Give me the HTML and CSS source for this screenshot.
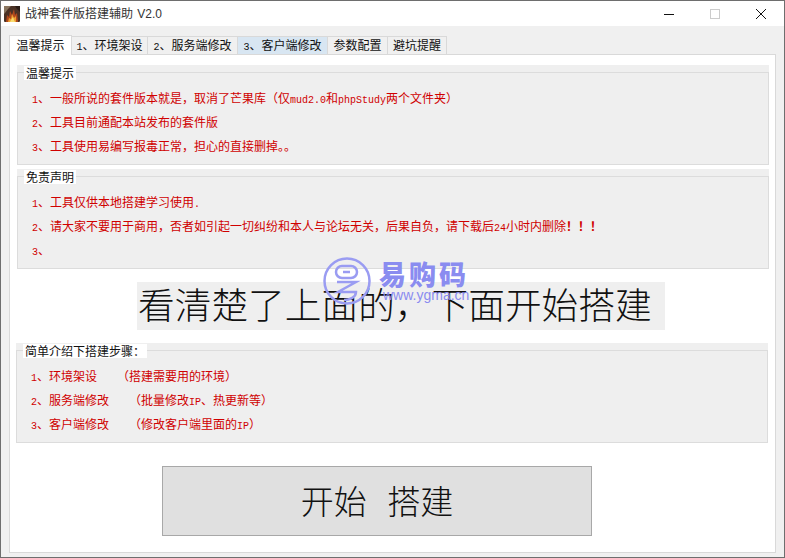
FILE: index.html
```html
<!DOCTYPE html>
<html lang="zh">
<head>
<meta charset="utf-8">
<title>战神套件版搭建辅助 V2.0</title>
<link rel="stylesheet" href="styles.css">
</head>
<body>
<div class="window">
  <header class="titlebar">
    <svg class="app-icon" viewBox="0 0 16 16" width="16" height="16">
      <rect width="16" height="16" rx="1" fill="#4a3226"/>
      <path d="M0 0H7L4 3L1 7L0 8Z" fill="#8a7660"/>
      <path d="M11 0H16V6L13 3Z" fill="#2a1c16"/>
      <path d="M2 16 L3 9 L5 11 L6 5 L8 9 L10 3 L11 9 L13 7 L14 16Z" fill="#b0481c"/>
      <path d="M4 16 L5 12 L7 13 L8 8 L10 12 L12 10 L12 16Z" fill="#eda030"/>
      <path d="M6 16 L7 14 L9 11 L10 14 L11 16Z" fill="#f8dc70"/>
    </svg>
    <span class="title">战神套件版搭建辅助 V2.0</span>
    <div class="controls">
      <svg class="ctl" viewBox="0 0 46 26" width="46" height="26"><path d="M18 13.5H28" stroke="#111" fill="none"/></svg>
      <svg class="ctl" viewBox="0 0 46 26" width="46" height="26"><rect x="18.5" y="8.5" width="9" height="9" stroke="#ccc" fill="none"/></svg>
      <svg class="ctl" viewBox="0 0 46 26" width="46" height="26"><path d="M18 8L28 18M28 8L18 18" stroke="#111" fill="none"/></svg>
    </div>
  </header>
  <div class="body">
    <nav class="tabs">
      <span class="tab active">温馨提示</span>
      <span class="tab t1"><span class="lat">1</span>、环境架设</span>
      <span class="tab t2"><span class="lat">2</span>、服务端修改</span>
      <span class="tab t3 hover"><span class="lat">3</span>、客户端修改</span>
      <span class="tab t4">参数配置</span>
      <span class="tab t5">避坑提醒</span>
    </nav>
    <main class="panel">
      <section class="group g1">
        <h2 class="legend">温馨提示</h2>
        <p><span class="lat">1</span>、一般所说的套件版本就是，取消了芒果库（仅<span class="lat">mud2.0</span>和<span class="lat">phpStudy</span>两个文件夹）</p>
        <p><span class="lat">2</span>、工具目前通配本站发布的套件版</p>
        <p><span class="lat">3</span>、工具使用易编写报毒正常，担心的直接删掉。。</p>
      </section>
      <section class="group g2">
        <h2 class="legend">免责声明</h2>
        <p><span class="lat">1</span>、工具仅供本地搭建学习使用<span class="lat">.</span></p>
        <p><span class="lat">2</span>、请大家不要用于商用，否者如引起一切纠纷和本人与论坛无关，后果自负，请下载后<span class="lat">24</span>小时内删除<b class="bang">！！！</b></p>
        <p><span class="lat">3</span>、</p>
      </section>
      <div class="banner">看清楚了上面的，下面开始搭建</div>
      <section class="group g3">
        <h2 class="legend">简单介绍下搭建步骤：</h2>
        <p><span class="lat">1</span>、环境架设<span class="gap1"></span>（搭建需要用的环境）</p>
        <p><span class="lat">2</span>、服务端修改<span class="gap2"></span>（批量修改<span class="lat">IP</span>、热更新等）</p>
        <p><span class="lat">3</span>、客户端修改<span class="gap2"></span>（修改客户端里面的<span class="lat">IP</span>）</p>
      </section>
      <div class="action"><button class="start">开始 搭建</button></div>
    </main>
  </div>
  <div class="watermark">
    <svg viewBox="0 0 48 48" width="48" height="48">
      <circle cx="24" cy="24" r="22.5" fill="none" stroke="#9a9cf2" stroke-width="2.5"/>
      <rect x="13" y="9" width="21" height="12" rx="6" fill="none" stroke="#9a9cf2" stroke-width="2.5"/>
      <path d="M20 15H27" stroke="#9a9cf2" stroke-width="2.5"/>
      <path d="M14 25H33L15 35H33C33 40 27 43 21 43" fill="none" stroke="#9a9cf2" stroke-width="2.5"/>
    </svg>
    <div class="wm-text">
      <span class="wm-cn">易购码</span>
      <span class="wm-url">www.ygma.cn</span>
    </div>
  </div>
</div>
</body>
</html>
```
FILE: styles.css
```css
* { box-sizing: border-box; margin: 0; padding: 0; }
html, body { width: 785px; height: 558px; overflow: hidden; background: #fff; }
body { font-family: "Noto Sans CJK SC", sans-serif; }
.window {
  position: relative; width: 785px; height: 558px;
  border: 1px solid #6e6e6e; background: #f0f0f0;
  display: flex; flex-direction: column;
}
.titlebar { height: 25px; background: #fff; display: flex; align-items: center; padding-left: 3px; flex: none; }
.app-icon { flex: none; }
.title { margin-left: 5px; padding-bottom: 2px; font-size: 12px; word-spacing: 1px; color: #333; font-family: "Liberation Sans", "Noto Sans CJK SC", sans-serif; white-space: nowrap; }
.controls { margin-left: auto; display: flex; }
.ctl { display: block; }
.body { flex: 1; padding: 9px 8px 4px 8px; display: flex; flex-direction: column; min-height: 0; }
.tabs { display: flex; height: 20px; margin-bottom: -1px; align-items: flex-start; position: relative; z-index: 1; flex: none; }
.tab {
  height: 18px; margin-top: 1px; background: #f0f0f0; border: 1px solid #d9d9d9; border-left: 0; border-bottom: 0;
  font-size: 12px; line-height: 16px; color: #111; text-align: center; white-space: nowrap;
}
.tab.active { height: 20px; margin-top: 0; width: 63px; background: #fff; border-left: 1px solid #d9d9d9; line-height: 18px; }
.t1 { width: 76px; } .t2 { width: 90px; } .t3 { width: 90px; } .t4 { width: 60px; } .t5 { width: 59px; }
.tab.hover { background: #d8e6f2; }
.lat { font-family: "Liberation Mono", monospace; font-size: 10px; line-height: 0; }
.panel { flex: 1; background: #fff; border: 1px solid #d9d9d9; padding: 17px 6px 0 7px; display: flex; flex-direction: column; min-height: 0; }
.group {
  position: relative; height: 93px; background: #efefef; border: 1px solid #dcdcdc;
  padding: 13px 0 0 14px; flex: none;
  box-shadow: 0 -7px 0 #efefef;
}
.legend {
  position: absolute; left: 6px; top: -7px; background: #fff; padding: 0 2px;
  font-size: 12px; font-weight: 400; line-height: 14px; color: #111; white-space: nowrap;
}
.group p { font-size: 12px; line-height: 24px; color: #d00000; white-space: nowrap; }
.bang { font-weight: 700; }
.g2 { margin-top: 11px; }
.banner {
  flex: none; width: 528px; height: 48px; margin: 13px 0 0 120px; padding-left: 1px; background: #efefef;
  font-size: 36.7px; line-height: 43px; color: #111; font-weight: 300; white-space: nowrap;
}
.g3 { margin: 20px 1px 0 -1px; }
.gap1 { display: inline-block; width: 20px; }
.gap2 { display: inline-block; width: 20px; }
.action { flex: none; padding: 23px 0 0 145px; }
.start {
  display: block; width: 430px; height: 70px; padding-bottom: 2px; background: #e0e0e0; border: 1px solid #a8a8a8;
  font-family: inherit; font-size: 33px; word-spacing: 13px; color: #111; font-weight: 300;
}
.watermark { position: absolute; left: 322px; top: 256px; display: flex; gap: 8px; pointer-events: none; }
.wm-text { display: flex; flex-direction: column; padding-top: 2px; }
.wm-cn { font-size: 27px; line-height: 30px; font-weight: 900; color: #8a8cf0; letter-spacing: 3px; white-space: nowrap; }
.wm-url { font-size: 14px; line-height: 12px; color: #8a8cf0; font-family: "Liberation Sans", sans-serif; white-space: nowrap; margin-left: 4px; }
```
